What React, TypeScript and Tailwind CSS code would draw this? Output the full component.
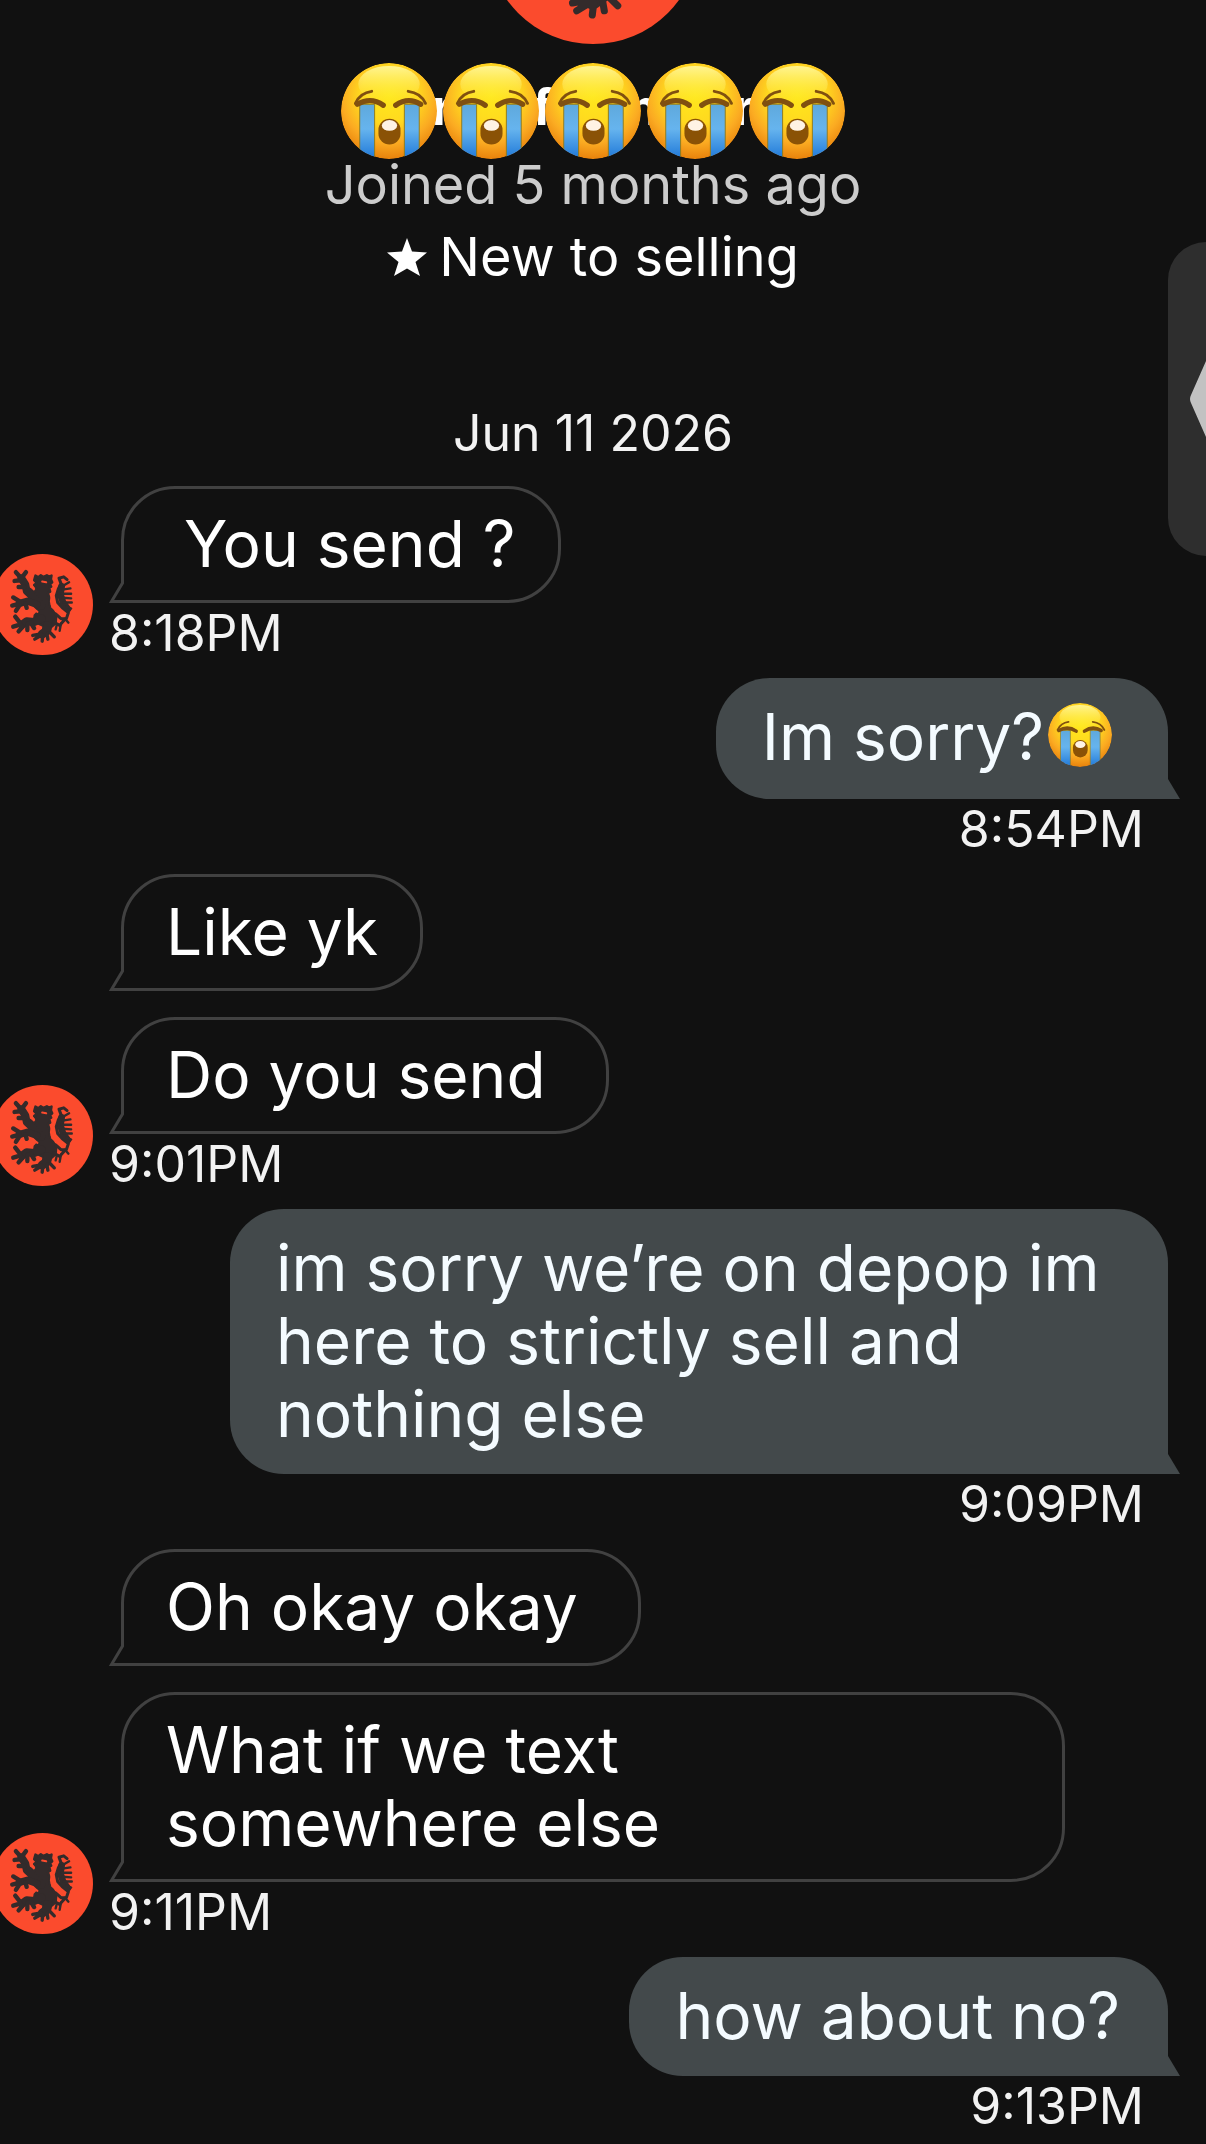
import React from 'react';
import { clsx } from 'clsx';

type Group = {
  id: number;
  from: 'them' | 'me';
  time: string;
  messages: { text: string; crying?: boolean }[];
};

const groups: Group[] = [
  { id: 1, from: 'them', time: '8:18PM', messages: [{ text: ' You send ?' }] },
  { id: 2, from: 'me', time: '8:54PM', messages: [{ text: 'Im sorry?', crying: true }] },
  { id: 3, from: 'them', time: '9:01PM', messages: [{ text: 'Like yk' }, { text: 'Do you send ' }] },
  {
    id: 4,
    from: 'me',
    time: '9:09PM',
    messages: [{ text: 'im sorry we’re on depop im here to strictly sell and nothing else' }],
  },
  {
    id: 5,
    from: 'them',
    time: '9:11PM',
    messages: [{ text: 'Oh okay okay ' }, { text: 'What if we text somewhere\u00a0else' }],
  },
  { id: 6, from: 'me', time: '9:13PM', messages: [{ text: 'how about no?' }] },
];

const CryingFace: React.FC<{ className?: string }> = ({ className }) => (
  <svg viewBox="0 0 100 100" role="img" aria-label="loudly crying face" className={className}>
    <defs>
      <radialGradient id="face" cx="50%" cy="34%" r="66%">
        <stop offset="0" stopColor="#ffe81c" />
        <stop offset="0.45" stopColor="#ffd91f" />
        <stop offset="0.75" stopColor="#fbab22" />
        <stop offset="1" stopColor="#e8820c" />
      </radialGradient>
      <linearGradient id="shine" x1="0" y1="0" x2="0" y2="1">
        <stop offset="0" stopColor="#fff8a0" stopOpacity="0.9" />
        <stop offset="1" stopColor="#fff04a" stopOpacity="0" />
      </linearGradient>
      <linearGradient id="tear" x1="0" y1="0" x2="0" y2="1">
        <stop offset="0" stopColor="#5fa9dc" />
        <stop offset="0.45" stopColor="#66b4ee" />
        <stop offset="1" stopColor="#1f78d8" />
      </linearGradient>
      <clipPath id="disc">
        <circle cx="50" cy="50" r="50" />
      </clipPath>
    </defs>
    <g clipPath="url(#disc)">
      <circle cx="50" cy="50" r="50" fill="url(#face)" />
      <ellipse cx="50" cy="22" rx="32" ry="19" fill="url(#shine)" />
      <path d="M19.500 43H35V100H19.500ZM66 43H81.500V100H66Z" fill="url(#tear)" stroke="#8f7a1c" strokeWidth="1" />
    </g>
    <g fill="none" stroke="#805010" strokeLinecap="round">
      <path d="M15 42Q20 31 32 29.500M88 42Q83 31 70 29.500" strokeWidth="3" />
      <path d="M17 43Q31 35 44 44M57 44Q70 35 83 43" strokeWidth="5.500" />
    </g>
    <rect x="39" y="58" width="23" height="27" rx="11.500" fill="#8a5206" />
    <ellipse cx="50.500" cy="65" rx="8" ry="5.500" fill="#fff3e4" />
  </svg>
);

const LionAvatar: React.FC<{ className?: string }> = ({ className }) => (
  <svg viewBox="-21 44 300 300" role="img" aria-label="Seller avatar" className={className}>
    <circle cx="129" cy="194" r="150" fill="#fb4b2d" />
    <g fill="#332b2b" stroke="#332b2b" strokeLinejoin="round" strokeLinecap="round">
      {/* head, crown and mane */}
      <path
        strokeWidth="7"
        d="M108 108L117 113L124 107L132 112L142 107L148 111L156 108L154 119L158 128L151 134L155 141L149 144L152 156L145 160L150 176L150 196L160 212L170 228L168 250L154 262L148 278L130 276L132 258L116 250L104 240L106 226L116 216L110 204L100 194L92 178L86 162L80 150L92 148L104 158L112 148L104 136L112 130L104 122Z"
      />
      {/* raised front paw */}
      <path strokeWidth="23" fill="none" d="M66 116L78 134L82 154L104 174L126 198" />
      <path strokeWidth="13" fill="none" d="M66 116L50 98M68 114L80 98M66 122L46 124M76 142L58 142" />
      {/* second front paw */}
      <path strokeWidth="21" fill="none" d="M60 191L84 184L112 194" />
      <path strokeWidth="13" fill="none" d="M60 184L42 173M58 192L39 197M62 194L50 213M78 190L82 204" />
      {/* hind legs */}
      <path strokeWidth="24" fill="none" d="M68 254L82 244L104 246L126 236" />
      <path strokeWidth="13" fill="none" d="M62 248L48 230M62 254L42 260M70 260L58 274M84 252L84 270M94 248L104 264" />
      <path strokeWidth="26" fill="none" d="M144 256L142 272L128 282" />
      <path strokeWidth="10" fill="none" d="M124 281L100 286M124 286L106 297M130 286L128 303M142 280L145 297M152 278L164 290" />
      {/* tail */}
      <path strokeWidth="9" fill="none" d="M162 246L180 256L194 240M168 222L184 236L200 236L206 218L188 204L174 188L170 168L176 148L184 132L178 116L192 112L202 120" />
      <path strokeWidth="20" fill="none" d="M186 140L182 164L190 188L204 208" />
      <path strokeWidth="7" fill="none" d="M184 142L208 128M188 150L212 146M186 162L214 162M188 174L214 176M192 188L216 188M200 200L214 206M196 236L206 248M184 250L180 272M172 252L168 268" />
    </g>
    <path
      d="M162 150L157 166L154 184L158 202L174 214L188 228M92 212L106 210L114 216M98 126L96 138L104 146M128 126L140 128"
      fill="none"
      stroke="#fb4b2d"
      strokeWidth="6"
      strokeLinecap="round"
    />
  </svg>
);

const Bubble: React.FC<{ mine: boolean; text: string; crying?: boolean }> = ({ mine, text, crying }) => (
  <div
    className={clsx(
      'relative text-[64px] leading-[73px] whitespace-pre-wrap',
      mine
        ? 'max-w-[938px] rounded-[54px] rounded-br-none bg-[#43494b] pt-[22px] pr-12 pb-6 pl-[46px] text-[#f4fbff]'
        : 'max-w-[944px] rounded-[54px] rounded-bl-none border-3 border-[#414141] px-[42px] pt-[18px] pb-5 text-white',
    )}
  >
    {text}
    {crying && <CryingFace className="-mt-2 mr-2 mb-2 ml-1 inline-block size-16 align-middle" />}
    {mine ? (
      <svg viewBox="0 0 12 20" className="absolute bottom-0 left-full h-5 w-3" aria-hidden="true">
        <path d="M0 0L12 20H0Z" fill="#43494b" />
      </svg>
    ) : (
      <svg viewBox="0 0 20 22" className="absolute -bottom-[3px] -left-[15px] h-[22px] w-5" aria-hidden="true">
        <path d="M11 0H20V22H0Z" fill="#111111" />
        <path d="M13.500 0V2L2.500 20.500H20" fill="none" stroke="#414141" strokeWidth="3" />
      </svg>
    )}
  </div>
);

const MessageGroup: React.FC<{ group: Group }> = ({ group }) => {
  const mine = group.from === 'me';

  return (
    <li className={clsx('flex items-end', mine ? 'justify-end pr-[38px]' : '-ml-2')}>
      {!mine && <LionAvatar className="mr-7 mb-2 size-[101px] shrink-0" />}
      <div className={clsx('flex min-w-0 flex-col', mine ? 'items-end' : 'items-start')}>
        <div className={clsx('flex flex-col gap-[26px]', mine ? 'items-end' : 'items-start')}>
          {group.messages.map(message => (
            <Bubble key={message.text} mine={mine} text={message.text} crying={message.crying} />
          ))}
        </div>
        <time
          className={clsx('text-[50px] leading-[60px] text-[#f2f2f2]', mine ? 'pr-6' : '-ml-3')}
        >
          {group.time}
        </time>
      </div>
    </li>
  );
};

export default function App() {
  return (
    <main className="relative min-h-screen overflow-hidden bg-[#111111] font-['Inter',sans-serif] text-white">
      <header className="flex flex-col items-center pr-5">
        <LionAvatar className="-mt-[168px] size-[212px]" />
        <div className="relative mt-[19px] flex gap-[6px]">
          <h1 className="absolute inset-0 grid grid-cols-4 items-center px-[51px] pb-2 text-center text-[50px] font-bold">
            <span>r</span>
            <span>f</span>
            <span>n</span>
            <span>r</span>
          </h1>
          {[0, 1, 2, 3, 4].map(i => (
            <CryingFace key={i} className="relative size-24" />
          ))}
        </div>
        <p className="text-[54px] leading-[52px] text-[#cccccc]">Joined 5 months ago</p>
        <p className="mt-5 flex items-center gap-3 text-[54px] leading-[52px]">
          <svg viewBox="0 0 40 38" className="h-[38px] w-10" aria-hidden="true">
            <path d="M20 0L25 13.500L40 14.500L28.500 24L33 38L20 30.500L7 38L11.500 24L0 14.500L15 13.500Z" fill="#ffffff" />
          </svg>
          New to selling
        </p>
      </header>

      <h2 className="mt-[126px] pr-5 text-center text-[50px] leading-[48px] font-normal text-[#f2f2f2]">
        Jun 11 2026
      </h2>

      <ul className="mt-[29px] flex flex-col gap-[15px]">
        {groups.map(group => (
          <MessageGroup key={group.id} group={group} />
        ))}
      </ul>

      <button
        aria-label="Open side panel"
        className="absolute top-[242px] right-0 h-[314px] w-[38px] overflow-hidden rounded-l-[38px] bg-[#2e2e2e]"
      >
        <svg viewBox="0 0 38 76" className="h-[76px] w-full" aria-hidden="true">
          <path d="M38 0L23 34Q21 38 23 42L38 76Z" fill="#c2c2c2" />
        </svg>
      </button>
    </main>
  );
}
